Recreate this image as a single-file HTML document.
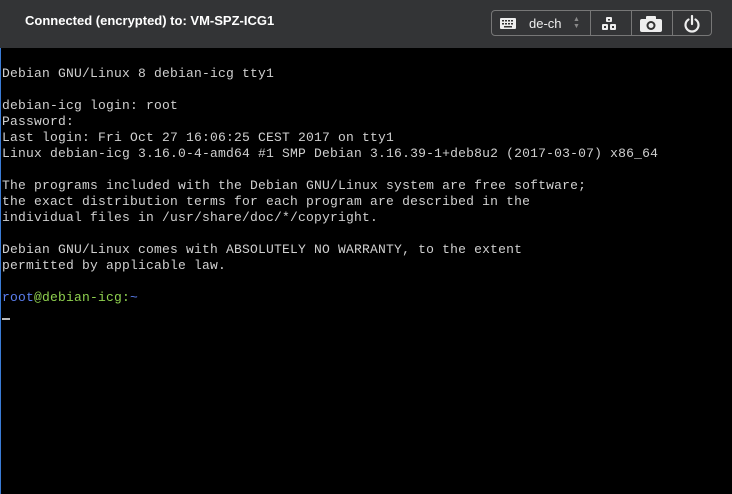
<!DOCTYPE html>
<html><head><style>
body{margin:0;width:732px;height:494px;background:#000;overflow:hidden;position:relative;font-family:"Liberation Sans",sans-serif}
#hdr{position:absolute;left:0;top:0;width:732px;height:48px;background:#333436}
#title{position:absolute;left:25px;top:13px;color:#fff;font-weight:bold;font-size:13px}
#tb{position:absolute;left:491px;top:10px;width:221px;height:26px;border:1px solid #777;border-radius:4px;box-sizing:border-box}
.sep{position:absolute;top:0;width:1px;height:24px;background:#777}
#term{position:absolute;left:0;top:48px;width:732px;height:446px;border-left:1px solid #3a7bd5;box-sizing:border-box}
pre{margin:0;position:absolute;left:1px;top:18px;font-family:"Liberation Mono",monospace;font-size:13px;letter-spacing:0.2px;line-height:16px;color:#d0d0d0}
.b{color:#5b7ff0}.g{color:#8fd14f}
</style></head><body>
<div id="hdr"><div id="title">Connected (encrypted) to: VM-SPZ-ICG1</div>
<div id="tb">
<svg style="position:absolute;left:8px;top:7px" width="16" height="11"><rect width="16" height="11" rx="1" fill="#eee"/><g fill="#333"><rect x="2" y="2" width="2" height="1.5"/><rect x="5" y="2" width="2" height="1.5"/><rect x="8" y="2" width="2" height="1.5"/><rect x="11" y="2" width="2" height="1.5"/><rect x="2" y="5" width="2" height="1.5"/><rect x="5" y="5" width="2" height="1.5"/><rect x="8" y="5" width="2" height="1.5"/><rect x="11" y="5" width="2" height="1.5"/><rect x="4" y="8" width="8" height="1.5"/></g></svg>
<div style="position:absolute;left:37px;top:5px;color:#eee;font-size:13px">de-ch</div>
<div style="position:absolute;left:81px;top:5px;color:#888;font-size:7px;line-height:7px">▲<br>▼</div>
<div class="sep" style="left:98px"></div>
<svg style="position:absolute;left:110px;top:6px" width="14" height="14"><g fill="#eee"><rect x="4" y="0" width="6" height="5" rx="1"/><rect x="0" y="7" width="6" height="6" rx="1"/><rect x="8" y="7" width="6" height="6" rx="1"/></g><rect x="6" y="2" width="2" height="1.5" fill="#333"/><rect x="2" y="9" width="2" height="2" fill="#333"/><rect x="10" y="9" width="2" height="2" fill="#333"/></svg>
<div class="sep" style="left:139px"></div>
<svg style="position:absolute;left:148px;top:4px" width="22" height="17"><rect x="0" y="4" width="22" height="13" rx="2" fill="#eee"/><rect x="6" y="1" width="10" height="5" rx="1" fill="#eee"/><circle cx="11" cy="10.5" r="4.5" fill="#333"/><circle cx="11" cy="10.5" r="2.5" fill="#eee"/></svg>
<div class="sep" style="left:180px"></div>
<svg style="position:absolute;left:191px;top:4px" width="18" height="18"><path d="M5.5 4.5A6.5 6.5 0 1 0 12.5 4.5" stroke="#eee" stroke-width="2.2" fill="none" stroke-linecap="round"/><line x1="9" y1="1" x2="9" y2="9" stroke="#eee" stroke-width="2.2" stroke-linecap="round"/></svg>
</div></div>
<div id="term"><pre>Debian GNU/Linux 8 debian-icg tty1

debian-icg login: root
Password:
Last login: Fri Oct 27 16:06:25 CEST 2017 on tty1
Linux debian-icg 3.16.0-4-amd64 #1 SMP Debian 3.16.39-1+deb8u2 (2017-03-07) x86_64

The programs included with the Debian GNU/Linux system are free software;
the exact distribution terms for each program are described in the
individual files in /usr/share/doc/*/copyright.

Debian GNU/Linux comes with ABSOLUTELY NO WARRANTY, to the extent
permitted by applicable law.

<span class="b">root</span><span class="g">@debian-icg:</span><span class="b">~</span>
<span style="display:inline-block;width:8px;height:2px;background:#bbb;vertical-align:-3px"></span></pre></div>
</body></html>
